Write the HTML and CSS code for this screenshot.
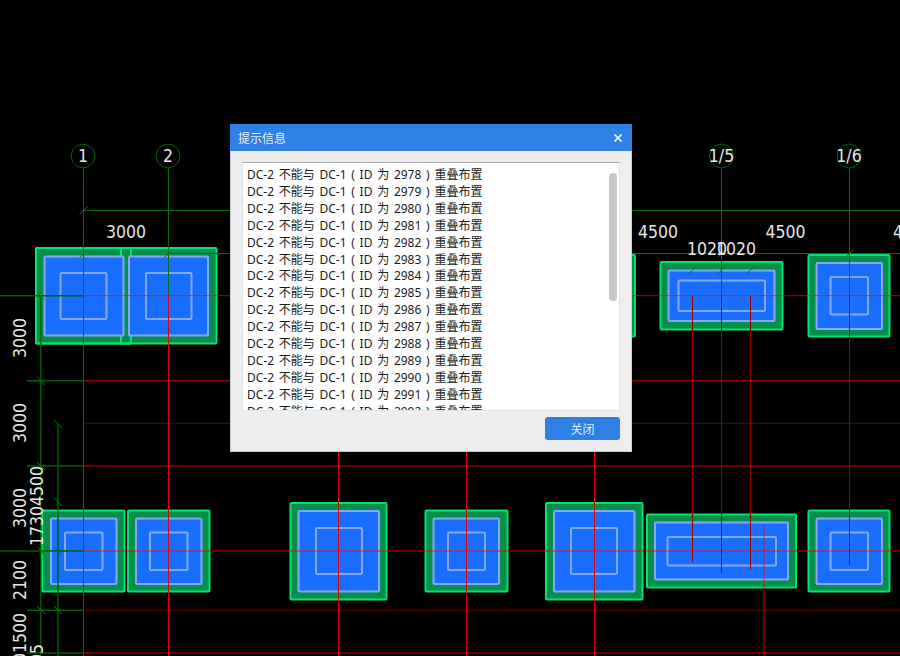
FILE: index.html
```html
<!DOCTYPE html>
<html lang="zh-CN">
<head>
<meta charset="utf-8">
<title>提示信息</title>
<link rel="stylesheet" href="styles.css">
</head>
<body>
<main class="canvas">
<svg class="drawing" width="900" height="656" viewBox="0 0 900 656" xmlns="http://www.w3.org/2000/svg">
  <defs>
    <polygon id="bubble" class="bubble" points="0,-12 6,-10.4 10.4,-6 12,0 10.4,6 6,10.4 0,12 -6,10.4 -10.4,6 -12,0 -10.4,-6 -6,-10.4"/>
    <path id="tick" class="tick" d="M-4,4 L4,-4"/>
    <path id="tickb" class="tick" d="M-4,-4 L4,4"/>
  </defs>

  <!-- footings: top row -->
  <rect class="outer" x="36" y="248" width="95" height="95.5" rx="1"/>
  <rect class="outer" x="121" y="248" width="95.5" height="95.5" rx="1"/>
  <rect class="outer-line" x="36" y="248" width="95" height="95.5" rx="1"/>
  <rect class="slab" x="44.5" y="256.5" width="79" height="79" rx="1"/>
  <rect class="slab" x="129" y="256.5" width="79" height="79" rx="1"/>
  <rect class="core" x="60.5" y="273" width="46" height="46" rx="1"/>
  <rect class="core" x="146" y="273" width="45.5" height="46" rx="1"/>

  <rect class="outer" x="546" y="255" width="89" height="81.5" rx="1"/>

  <rect class="outer" x="660.5" y="262" width="122" height="67.5" rx="1"/>
  <rect class="slab" x="668.5" y="270.5" width="106" height="50.5" rx="1"/>
  <rect class="core" x="678.5" y="280.5" width="86.5" height="30.5" rx="1"/>

  <rect class="outer" x="808.5" y="255" width="81" height="81.5" rx="1"/>
  <rect class="slab" x="816.5" y="263" width="65.5" height="66" rx="1"/>
  <rect class="core" x="830.5" y="277" width="37.5" height="37.5" rx="1"/>

  <!-- footings: bottom row -->
  <rect class="outer" x="42" y="510.5" width="82.5" height="81" rx="1"/>
  <rect class="slab" x="51" y="518.5" width="65.5" height="65.5" rx="1"/>
  <rect class="core" x="65" y="532.5" width="37.5" height="37.5" rx="1"/>

  <rect class="outer" x="128" y="510.5" width="81.5" height="81" rx="1"/>
  <rect class="slab" x="136" y="518.5" width="65.5" height="65.5" rx="1"/>
  <rect class="core" x="150" y="532.5" width="37.5" height="37.5" rx="1"/>

  <rect class="outer" x="290.5" y="503" width="96" height="96.5" rx="1"/>
  <rect class="slab" x="298.5" y="511" width="80.5" height="80.5" rx="1"/>
  <rect class="core" x="316" y="528" width="46" height="46" rx="1"/>

  <rect class="outer" x="425.5" y="510.5" width="82" height="81" rx="1"/>
  <rect class="slab" x="433.5" y="518.5" width="65.5" height="65.5" rx="1"/>
  <rect class="core" x="448" y="532.5" width="37" height="37.5" rx="1"/>

  <rect class="outer" x="546" y="503" width="96.5" height="96.5" rx="1"/>
  <rect class="slab" x="554" y="511" width="80.5" height="80.5" rx="1"/>
  <rect class="core" x="571" y="528" width="46" height="46" rx="1"/>

  <rect class="outer" x="647" y="514.5" width="149" height="73" rx="1"/>
  <rect class="slab" x="655" y="522.5" width="133" height="57" rx="1"/>
  <rect class="core" x="667.5" y="537" width="108.5" height="28.5" rx="1"/>

  <rect class="outer" x="808.5" y="510.5" width="81" height="81" rx="1"/>
  <rect class="slab" x="816.5" y="518.5" width="65.5" height="65.5" rx="1"/>
  <rect class="core" x="830.5" y="532.5" width="37.5" height="37.5" rx="1"/>

  <!-- axis lines, green part -->
  <path class="axis" d="M83.5,168 V296 M168.5,168 V296 M721.5,168 V296 M849.5,168 V296"/>
  <path class="axis" d="M83,210.5 H900 M168,253.5 H900"/>
  <path class="axis-heavy" d="M0,295.7 H83 M27,380.7 H83 M27,466 H83 M0,551 H83 M27,610.3 H83 M27,653 H83"/>
  <path class="axis-heavy" d="M40.8,296 V656 M58,425 V656"/>

  <use href="#bubble" x="83" y="156"/>
  <use href="#bubble" x="168" y="156"/>
  <use href="#bubble" x="721.5" y="156"/>
  <use href="#bubble" x="849" y="156"/>

  <use href="#tick" x="83.5" y="210.5"/>
  <use href="#tick" x="83.5" y="253.5"/>
  <use href="#tick" x="168.5" y="253.5"/>
  <use href="#tick" x="721.5" y="253.5"/>
  <use href="#tick" x="849.5" y="253.5"/>
  <use href="#tick" x="692.5" y="270"/>
  <use href="#tick" x="721.5" y="270"/>
  <use href="#tick" x="750.5" y="270"/>
  <use href="#tickb" x="41" y="296"/>
  <use href="#tickb" x="41" y="381"/>
  <use href="#tickb" x="41" y="466"/>
  <use href="#tickb" x="41" y="551"/>
  <use href="#tickb" x="41" y="610"/>
  <use href="#tickb" x="58" y="424"/>
  <use href="#tickb" x="58" y="502"/>
  <use href="#tickb" x="58" y="551"/>
  <use href="#tickb" x="58" y="610"/>

  <!-- beam lines, red part -->
  <path class="beam-h" d="M83,380.7 H900 M83,466 H900 M83,551 H900 M83,653 H900"/>
  <path class="beam-top" d="M83,295.7 H900"/>
  <path class="beam-thin" d="M83,423.3 H900 M83,610.3 H900"/>
  <path class="beam-v" d="M83.5,296 V656 M168.5,296 V656 M338.5,296 V656 M466.5,296 V656 M594.5,296 V656"/>
  <path class="beam-dim" d="M692.5,296 V562 M721.5,296 V573 M750.5,296 V569 M849.5,296 V565"/>
  <path class="beam-h" d="M764,525 V656"/>

  <!-- dimensions -->
  <g class="dim">
    <text class="center" x="83" y="162">1</text>
    <text class="center" x="168" y="162">2</text>
    <text class="center" x="721.5" y="162">1/5</text>
    <text class="center" x="849" y="162">1/6</text>
    <text class="center" x="126" y="238">3000</text>
    <text class="center" x="658" y="238">4500</text>
    <text class="center" x="785.5" y="238">4500</text>
    <text x="893" y="238">4</text>
    <text class="center" x="707" y="255">1020</text>
    <text class="center" x="736" y="255">1020</text>
    <text class="center" transform="translate(26 338) rotate(-90)">3000</text>
    <text class="center" transform="translate(26 423) rotate(-90)">3000</text>
    <text class="center" transform="translate(26 508) rotate(-90)">3000</text>
    <text class="center" transform="translate(26 580) rotate(-90)">2100</text>
    <text class="center" transform="translate(43 506) rotate(-90)">17304500</text>
    <text transform="translate(26 663) rotate(-90)">01500</text>
    <text transform="translate(43 664) rotate(-90)">95</text>
  </g>
</svg>

<section class="dialog" role="dialog" aria-label="提示信息">
  <header class="dialog-head">
    <h1 class="dialog-title">提示信息</h1>
    <svg class="dialog-close" width="10" height="10" viewBox="0 0 10 10" xmlns="http://www.w3.org/2000/svg"><path d="M1.5,1.5 L8.5,8.5 M8.5,1.5 L1.5,8.5"/></svg>
  </header>
  <div class="dialog-body">
    <div class="log">
      <ul class="log-list">
        <li>DC-2 不能与 DC-1 ( ID 为 2978 ) 重叠布置</li>
        <li>DC-2 不能与 DC-1 ( ID 为 2979 ) 重叠布置</li>
        <li>DC-2 不能与 DC-1 ( ID 为 2980 ) 重叠布置</li>
        <li>DC-2 不能与 DC-1 ( ID 为 2981 ) 重叠布置</li>
        <li>DC-2 不能与 DC-1 ( ID 为 2982 ) 重叠布置</li>
        <li>DC-2 不能与 DC-1 ( ID 为 2983 ) 重叠布置</li>
        <li>DC-2 不能与 DC-1 ( ID 为 2984 ) 重叠布置</li>
        <li>DC-2 不能与 DC-1 ( ID 为 2985 ) 重叠布置</li>
        <li>DC-2 不能与 DC-1 ( ID 为 2986 ) 重叠布置</li>
        <li>DC-2 不能与 DC-1 ( ID 为 2987 ) 重叠布置</li>
        <li>DC-2 不能与 DC-1 ( ID 为 2988 ) 重叠布置</li>
        <li>DC-2 不能与 DC-1 ( ID 为 2989 ) 重叠布置</li>
        <li>DC-2 不能与 DC-1 ( ID 为 2990 ) 重叠布置</li>
        <li>DC-2 不能与 DC-1 ( ID 为 2991 ) 重叠布置</li>
        <li>DC-2 不能与 DC-1 ( ID 为 2992 ) 重叠布置</li>
      </ul>
      <span class="log-thumb"></span>
    </div>
    <footer class="dialog-foot">
      <button class="dialog-btn" type="button">关闭</button>
    </footer>
  </div>
</section>
</main>
</body>
</html>
```
FILE: styles.css
```css
* { box-sizing: border-box; }
html, body { margin: 0; padding: 0; background: #000; }
body { width: 900px; height: 656px; overflow: hidden; }
.canvas { position: relative; width: 900px; height: 656px; }
.drawing { position: absolute; left: 0; top: 0; display: block; }

.outer { fill: #078e4b; stroke: #00e372; stroke-width: 2; }
.outer-line { fill: none; stroke: #00e372; stroke-width: 2; }
.slab { fill: #1a6eff; stroke: #83a9ee; stroke-width: 2; }
.core { fill: none; stroke: #83a9ee; stroke-width: 2; }

.axis { fill: none; stroke: #067006; stroke-width: 1; }
.axis-heavy { fill: none; stroke: #005f00; stroke-width: 1.4; }
.bubble { fill: none; stroke: #066a06; stroke-width: 1; }
.tick { fill: none; stroke: #087c08; stroke-width: 1; }

.beam-h { fill: none; stroke: #ff0000; stroke-opacity: .56; stroke-width: 1.4; }
.beam-top { fill: none; stroke: #ff0000; stroke-opacity: .7; stroke-width: 1; }
.beam-thin { fill: none; stroke: #ff0000; stroke-opacity: .42; stroke-width: 1; }
.beam-v { fill: none; stroke: #e80000; stroke-width: 1; }
.beam-dim { fill: none; stroke: #960000; stroke-width: 1; }

.dim text { font-family: "DejaVu Sans", sans-serif; font-stretch: condensed; font-size: 17.5px; fill: #e6e6e6; }
.dim .center { text-anchor: middle; }

.dialog {
  position: absolute;
  left: 230px;
  top: 124px;
  width: 402px;
  height: 328px;
  display: flex;
  flex-direction: column;
  background: #eeeeee;
  border: 1px solid #c8ccd4;
  border-top: 0;
  font-family: "Noto Sans", "Noto Sans CJK SC", sans-serif;
}
.dialog-head {
  flex: none;
  height: 27px;
  margin: 0 -1px;
  padding: 0 9px 0 8px;
  display: flex;
  align-items: center;
  justify-content: space-between;
  background: #2f80e4;
}
.dialog-title {
  margin: 0;
  font-family: "Noto Sans CJK SC", sans-serif;
  font-size: 12px;
  font-weight: 400;
  color: #e4eefc;
}
.dialog-close { display: block; }
.dialog-close path { fill: none; stroke: #fff; stroke-width: 1.6; }

.dialog-body {
  flex: 1;
  min-height: 0;
  display: flex;
  flex-direction: column;
  padding: 11px;
}
.log {
  position: relative;
  flex: none;
  height: 249px;
  background: #fff;
  border: 1px solid #dfe3ea;
  border-top-color: #aaaaaa;
  overflow: hidden;
}
.log-list {
  margin: 0;
  padding: 4px 0 0 4px;
  list-style: none;
  font-size: 12px;
  line-height: 16.9px;
  word-spacing: 1.6px;
  color: #1c1c1c;
  white-space: nowrap;
}
.log-thumb {
  position: absolute;
  right: 2px;
  top: 10px;
  width: 8px;
  height: 128px;
  border-radius: 4px;
  background: #c8c8c8;
}
.dialog-foot {
  flex: none;
  display: flex;
  justify-content: flex-end;
  padding-top: 6px;
}
.dialog-btn {
  width: 75px;
  height: 23px;
  padding: 0;
  border: 0;
  border-radius: 3px;
  background: #2f80e4;
  color: #dfeafa;
  font-family: "Noto Sans CJK SC", sans-serif;
  font-size: 12px;
}
```
